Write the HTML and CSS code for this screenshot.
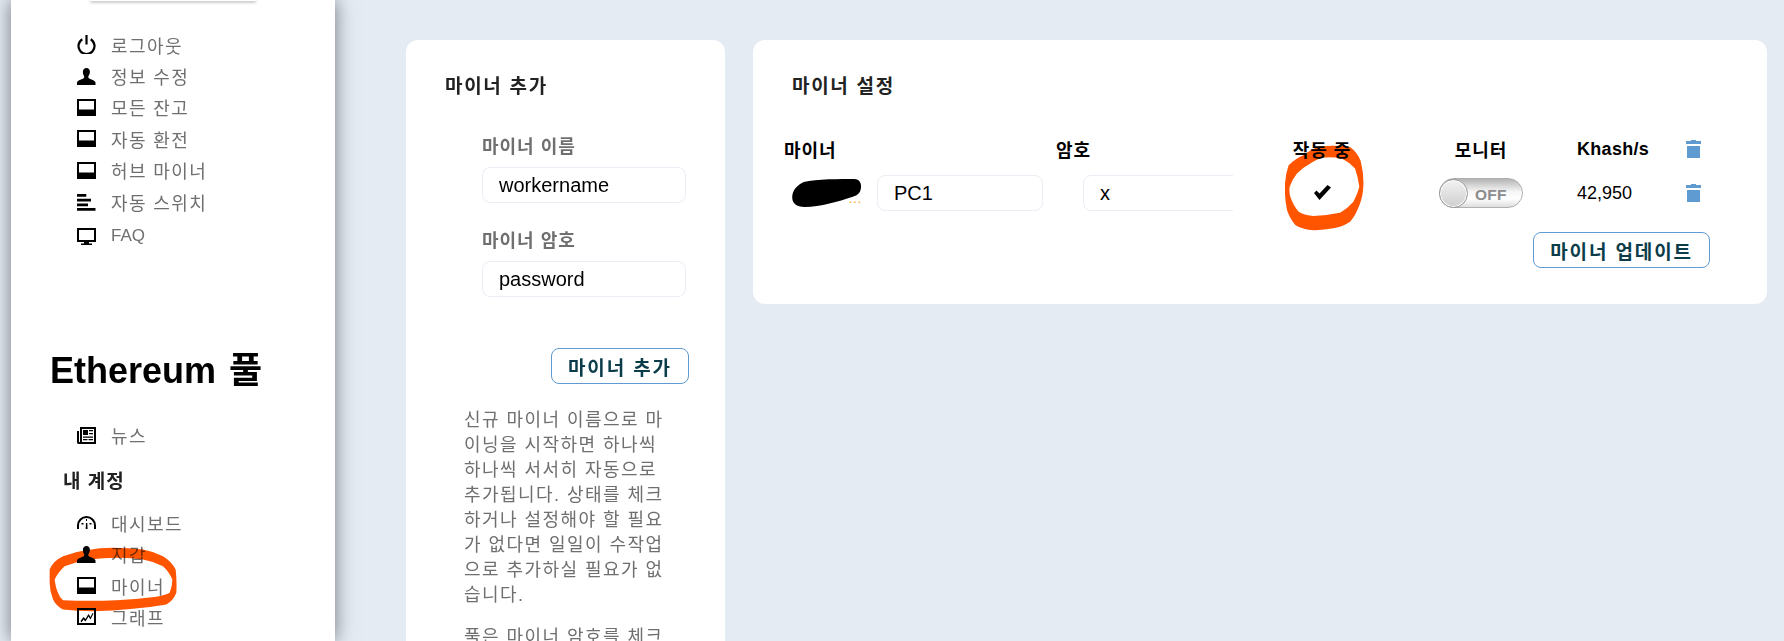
FILE: index.html
```html
<!DOCTYPE html>
<html lang="ko">
<head>
  <meta charset="UTF-8" />
  <title>마이너</title>
  <link rel="stylesheet" href="styles.css">
</head>
<body>
  <svg width="0" height="0" class="defs">
    <symbol id="i-user" viewBox="0 0 19 19"><path d="M9.5 1c2.300 0 3.400 1.800 3.400 3.800 0 2-.8 3.400-1.500 4.500-.6 1 .3 2.100 1.800 2.700 2.300.9 5.300 1.700 5.300 3.800V18H0v-2.200c0-2.100 3-2.900 5.300-3.800 1.500-.6 2.400-1.700 1.800-2.700C6.400 8.200 5.900 6.800 5.900 4.800 5.900 2.800 7.200 1 9.500 1z"/></symbol>
    <symbol id="i-laptop" viewBox="0 0 19 19"><path fill-rule="evenodd" d="M0 1h19v17H0zM2 3v8.500h15V3z"/></symbol>
    <symbol id="i-trash" viewBox="0 0 15 18"><path d="M5 0h5v1h5v3H0V1h5zM1 6h13v12H1z"/></symbol>
  </svg>

  <aside class="sidebar">
    <div class="user-box"></div>
    <ul class="nav nav-top">
      <li><svg class="icon" viewBox="0 0 19 19"><path d="M5.300 4.200a8 8 0 1 0 8.400 0" fill="none" stroke="#000" stroke-width="2.200"/><rect x="8.400" y="0" width="2.200" height="9.500"/></svg>로그아웃</li>
      <li><svg class="icon"><use href="#i-user"/></svg>정보 수정</li>
      <li><svg class="icon"><use href="#i-laptop"/></svg>모든 잔고</li>
      <li><svg class="icon"><use href="#i-laptop"/></svg>자동 환전</li>
      <li><svg class="icon"><use href="#i-laptop"/></svg>허브 마이너</li>
      <li><svg class="icon" viewBox="0 0 19 19"><path d="M0 2h9.300v2.800H0zM0 6.700h14v2.800H0zM0 11.400h11v2.800H0zM0 16h18.500v2.800H0z"/></svg>자동 스위치</li>
      <li class="latin"><svg class="icon" viewBox="0 0 19 19"><path fill-rule="evenodd" d="M0 1h19v14h-7v1.500h3V18H4v-1.500h3V15H0zM2 3v10h15V3z"/></svg>FAQ</li>
    </ul>

    <h1 class="pool-name">Ethereum 풀</h1>
    <ul class="nav nav-news">
      <li><svg class="icon" viewBox="0 0 19 19"><path fill-rule="evenodd" d="M3 1h16v17H1.500C.500 18 0 17 0 16V5h2v11h1zM5 3v13h12V3zM6 4h5v5H6zM12 4h4v1.300h-4zM12 7h4v1.300h-4zM6 10.500h10v1.300H6zM6 13h4.500v1.300H6zM11.500 13H16v1.300h-4.500z"/></svg>뉴스</li>
    </ul>
    <h2 class="nav-title">내 계정</h2>
    <ul class="nav nav-account">
      <li><svg class="icon" viewBox="0 0 19 19"><path fill-rule="evenodd" d="M9.500 3a9.500 9.500 0 0 1 9.500 9.500V16h-2v-3.500a7.500 7.500 0 0 0-15 0V16H0v-3.500A9.500 9.500 0 0 1 9.500 3zM9 6h1v2H9zM4.500 10h2v1.500h-2zM12.500 10h2v1.500h-2zM9 10h1.300l.3 6H8.700z"/></svg>대시보드</li>
      <li><svg class="icon"><use href="#i-user"/></svg>지갑</li>
      <li><svg class="icon"><use href="#i-laptop"/></svg>마이너</li>
      <li><svg class="icon" viewBox="0 0 19 19"><path fill-rule="evenodd" d="M0 1h19v17H0zM2 3v13h15V3zM3.500 14l3-4 2 2 3-5 2 3 2-4 1 .6-3 6-2-3-3 5-2-2-2 3z"/></svg>그래프</li>
    </ul>
    <svg class="scribble scribble-nav" viewBox="148 623 384 194"><path fill-rule="evenodd" d="M150 690Q160 664 190 650 225 636 260 632 300 625 340 625 385 625 430 630 462 636 490 650 516 666 528 690 532 725 530 760 520 785 500 795 450 804 400 808 340 815 280 815 235 815 190 810 170 800 160 780 150 755 150 730zM165 720Q168 745 175 760 180 775 190 782 270 786 350 782 410 780 470 772 495 768 510 760 518 742 518 720 508 696 490 680 462 666 430 660 390 654 350 655 310 655 270 660 230 666 195 680 175 698 165 720z"/></svg>
  </aside>

  <main class="content">
    <section class="card card-add">
      <h3 class="card-title">마이너 추가</h3>
      <div class="add-form">
        <label class="field-label">마이너 이름</label>
        <input class="text-input" value="workername">
        <label class="field-label">마이너 암호</label>
        <input class="text-input" value="password">
      </div>
      <div class="add-action"><button class="btn">마이너 추가</button></div>
      <div class="help">
        <p>신규 마이너 이름으로 마<br>이닝을 시작하면 하나씩<br>하나씩 서서히 자동으로<br>추가됩니다. 상태를 체크<br>하거나 설정해야 할 필요<br>가 없다면 일일이 수작업<br>으로 추가하실 필요가 없<br>습니다.</p>
        <p>풀은 마이너 암호를 체크</p>
      </div>
    </section>

    <section class="card card-settings">
      <h3 class="card-title">마이너 설정</h3>
      <div class="miner-grid">
        <div class="th">마이너</div>
        <div class="th">암호</div>
        <div class="th center">작동 중</div>
        <div class="th center">모니터</div>
        <div class="th latin-th">Khash/s</div>
        <div class="trash-cell"><svg class="trash"><use href="#i-trash"/></svg></div>

        <div class="miner-name">
          <div class="miner-addr">
            <span class="addr-dots">…</span>
            <svg class="redact" viewBox="0 0 72 30"><path d="M12 3C25 0 50 0 64 0c6 0 8 5 7 10-1 6-5 7-10 9-12 4-32 10-48 10C4 29 0 25 0 19 0 12 5 6 12 3z"/></svg>
          </div>
          <input class="text-input name-input" value="PC1">
        </div>
        <div class="pass-cell"><input class="text-input pass-input" value="x"></div>
        <div class="center check">
          <svg class="check-icon" viewBox="0 0 18 16"><path d="M1 8l2.500-2.500 3 3L14.500 0 18 2.500 6.500 15z"/></svg>
        </div>
        <div class="center">
          <div class="toggle"><span class="toggle-knob"></span><span class="toggle-text">OFF</span></div>
        </div>
        <div class="rate">42,950</div>
        <div class="trash-cell"><svg class="trash"><use href="#i-trash"/></svg></div>
      </div>
      <div class="update-action"><button class="btn">마이너 업데이트</button></div>
      <svg class="scribble scribble-check" viewBox="44 315 238 257"><path fill-rule="evenodd" d="M150 318Q200 314 240 320 262 336 272 362 282 400 280 440 278 470 270 490 258 525 240 545 218 560 190 565 155 572 120 570 92 566 75 555 58 535 50 510 42 470 44 430 46 400 55 375 75 355 100 345 125 325 150 318zM155 352Q135 358 120 370 98 382 80 400 66 418 58 440 56 456 60 470 70 498 85 515 105 526 130 528 172 526 210 518 234 504 250 485 262 464 268 440 264 410 255 385 238 366 215 355 185 348 155 352z"/></svg>
    </section>
  </main>
</body>
</html>
```

FILE: styles.css
```css
* { margin: 0; padding: 0; box-sizing: border-box; }
html, body { height: 100%; overflow: hidden; }
body {
  display: flex; align-items: flex-start;
  background: #e4ebf3;
  font-family: "Liberation Sans", "Noto Sans CJK KR", sans-serif;
  color: #000;
}
.defs { position: absolute; }
ul { list-style: none; }

/* sidebar */
.sidebar {
  position: relative;
  flex: none; width: 324px; height: 641px; margin-left: 11px;
  background: #fff;
  box-shadow: 0 0 18px rgba(0,0,0,0.5);
}
.user-box {
  width: 166px; height: 1px; margin-left: 79px;
  border-radius: 0 0 4px 4px;
  box-shadow: 0 1px 3px rgba(0,0,0,0.6);
}
.nav li {
  display: flex; align-items: center; height: 31.4px; padding-left: 66px;
  font-size: 18px; letter-spacing: 1.400px; color: #6f6f6f;
}
.nav li.latin { margin-top: 3px; font-size: 17px; letter-spacing: 0; }
.icon { flex: none; width: 19px; height: 19px; margin-right: 15px; fill: #000; }
.nav-top { margin-top: 28px; }
.pool-name { margin: 97px 0 0 39px; font-size: 36px; line-height: 44px; font-weight: 700; word-spacing: 3px; }
.nav-news { margin-top: 27px; }
.nav-title { margin: 19px 0 0 52px; font-size: 19px; line-height: 24px; font-weight: 700; color: #222; letter-spacing: 1px; }
.nav-account { margin-top: 13px; }
.scribble { position: absolute; mix-blend-mode: multiply; fill: #ff5500; }
.scribble-nav { left: 38px; top: 547px; width: 128px; height: 65px; }

/* cards */
.content { display: flex; align-items: flex-start; gap: 28px; padding: 40px 0 0 71px; }
.card { background: #fff; border-radius: 12px; }
.card-title { font-size: 19px; line-height: 24px; font-weight: 700; letter-spacing: 1.700px; color: #222; }
.card-add { flex: none; width: 319px; height: 640px; padding: 35px 0 0 39px; }
.add-form { margin: 36px 0 0 37px; }
.field-label {
  display: block; margin-bottom: 8px;
  font-size: 18px; line-height: 24px; font-weight: 700; letter-spacing: 1px; color: #6f6f6f;
}
.text-input {
  display: block; height: 36px; padding: 0 16px;
  border: 1px solid #e8eef4; border-radius: 8px; background: #fff;
  font-family: inherit; font-size: 20px; color: #000; outline: none;
}
.add-form .text-input { width: 204px; margin-bottom: 26px; }
.add-action { display: flex; justify-content: flex-end; width: 244px; margin-top: 51px; }
.btn {
  height: 36px; padding: 0 16px;
  border: 1px solid #5f9bd0; border-radius: 8px; background: #fff;
  font-family: inherit; font-size: 19px; font-weight: 700; letter-spacing: 1.900px; color: #0b3c49;
}
.help { width: 200px; margin: 24px 0 0 19px; font-size: 18px; line-height: 25px; letter-spacing: 1.450px; color: #6f6f6f; }
.help p { margin-bottom: 17px; white-space: nowrap; }

.card-settings { position: relative; flex: none; width: 1014px; height: 264px; padding: 35px 57px 0 31px; }
.card-settings .card-title { margin-left: 8px; }
.miner-grid {
  display: grid; margin-top: 37px;
  grid-template-columns: 272px 199px 134px 184px 113px 24px;
  grid-template-rows: 26px 36px; row-gap: 13px; align-items: center;
}
.th { font-size: 18px; font-weight: 700; letter-spacing: 1px; }
.center { display: flex; justify-content: center; text-align: center; }
.th.latin-th { padding-left: 4px; letter-spacing: 0.300px; }
.miner-name { display: flex; align-items: center; gap: 15px; padding-left: 8px; }
.miner-addr { position: relative; flex: none; width: 70px; height: 29px; }
.addr-dots { position: absolute; right: 0; bottom: 3px; font-size: 14px; line-height: 14px; color: #f5a623; }
.redact { position: absolute; left: 0; top: 0; width: 70px; height: 29px; }
.name-input { width: 166px; }
.pass-cell { width: 150px; margin-left: 27px; overflow: hidden; }
.pass-input { width: 200px; }
.check-icon { width: 18px; height: 16px; }
.toggle {
  display: flex; align-items: center; width: 84px; height: 30px;
  border: 1px solid #b0b0b0; border-radius: 15px;
  background: linear-gradient(#b4b4b4, #f6f6f6 45%, #ffffff 70%, #dedede);
}
.toggle-knob {
  flex: none; width: 29px; height: 29px; margin-left: -1px; border-radius: 50%;
  background: linear-gradient(#f2f2f2, #cfcfcf);
  border: 1px solid #9a9a9a;
  box-shadow: inset 0 0 0 1px #fff;
}
.toggle-text { margin: 3px 0 0 7px; font-size: 15.500px; font-weight: 700; letter-spacing: 0.300px; color: #8c8c8c; }
.rate { padding-left: 4px; font-size: 18px; }
.trash-cell { line-height: 0; }
.trash { width: 15px; height: 18px; fill: #5f9bd0; }
.update-action { display: flex; justify-content: flex-end; margin-top: 21px; }
.scribble-check { left: 532px; top: 105px; width: 79px; height: 86px; }
```
